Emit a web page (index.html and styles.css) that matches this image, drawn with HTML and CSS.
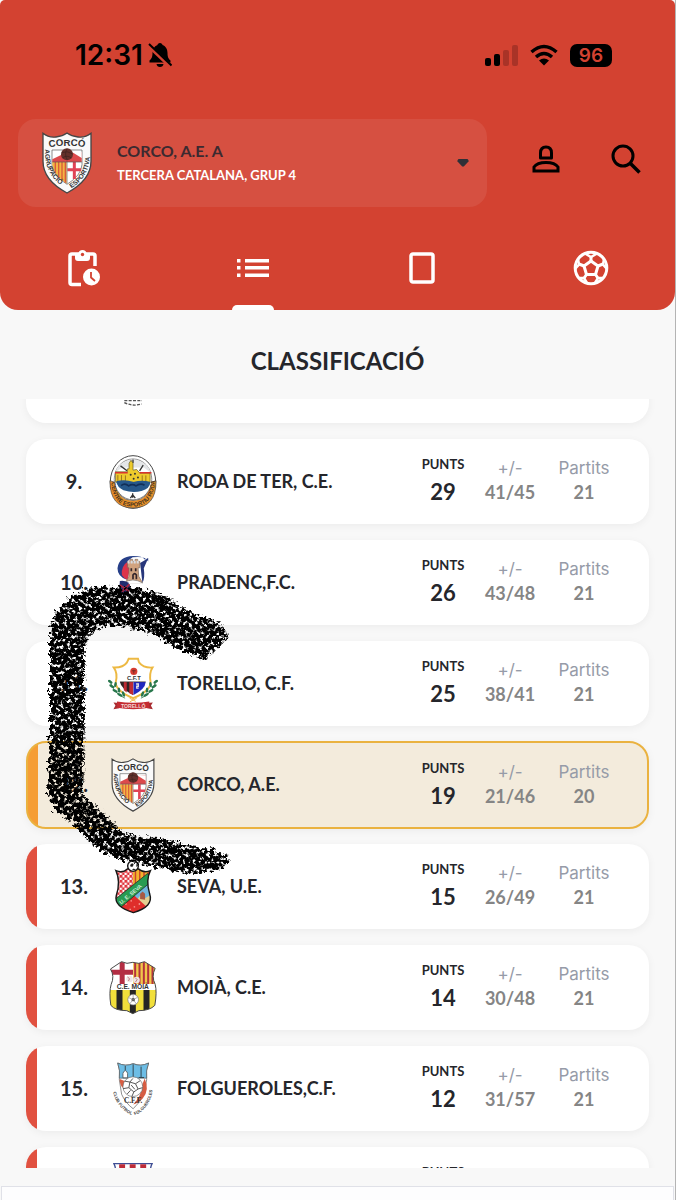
FILE: index.html
```html
<!DOCTYPE html>
<html lang="ca">
<head>
    <meta charset="UTF-8">
    <meta name="viewport" content="width=device-width, initial-scale=1.0">
    <title>Classificació</title>
    <link rel="stylesheet" href="styles.css">
</head>
<body>

    <!-- Escut compartit per la capçalera i la fila de l'equip -->
    <svg class="defs" aria-hidden="true">
        <symbol id="escut-corco" viewBox="0 0 150 186">
            <path d="M3 4Q20 18 42 15Q62 13 75 3Q88 13 108 15Q130 18 147 4V88C147 130 118 160 75 183C32 160 3 130 3 88Z" fill="#fafafa" stroke="#454545" stroke-width="4"/>
            <path d="M30 54H120V98Q118 130 75 157Q32 130 30 98Z" fill="#fff" stroke="#555" stroke-width="2"/>
            <path d="M31 82L68 64L119 60V90H31Z" fill="#dc4a4c"/>
            <path d="M90 60H119V78Z" fill="#fff"/>
            <path d="M31 90H74V155Q34 128 31 98Z" fill="#f4b443"/>
            <path d="M40 90V124M50 90V138M60 90V146M70 90V152" stroke="#d95b3a" stroke-width="4"/>
            <path d="M97 90V141M76 113H117" stroke="#e04355" stroke-width="9"/>
            <path d="M31 90H119M75 88V155" stroke="#555" stroke-width="2"/>
            <circle cx="75" cy="67" r="18" fill="#63302a"/>
            <path d="M59 62Q75 55 91 65M62 77Q75 68 88 78M75 50Q66 67 76 84" fill="none" stroke="#3d211e" stroke-width="2"/>
            <path id="corco-dalt" d="M14 47Q75 36 136 47" fill="none"/>
            <path id="corco-esquerra" d="M9 52C7 103 26 140 64 164" fill="none"/>
            <path id="corco-dreta" d="M88 169C125 147 146 110 145 54" fill="none"/>
            <g font-family="Liberation Sans, sans-serif" font-weight="bold" fill="#333">
                <text font-size="29"><textPath href="#corco-dalt" startOffset="50%" text-anchor="middle">CORCÓ</textPath></text>
                <text font-size="20"><textPath href="#corco-esquerra">AGRUPACIÓ</textPath></text>
                <text font-size="20"><textPath href="#corco-dreta">ESPORTIVA</textPath></text>
            </g>
        </symbol>
    </svg>

    <header class="app-header">
        <div class="status-bar">
            <div class="status-time">
                <span>12:31</span>
                <svg width="24" height="26" viewBox="0 0 24 26" aria-label="Silenci">
                    <path d="M12 1C13.5 1 14.4 2 14.5 3C18 4.300 19.500 7.500 19.500 11C19.500 16 21 17 22.500 18.500V20.500H1.500V18.500C3 17 4.500 16 4.500 11C4.500 7.500 6 4.300 9.500 3C9.600 2 10.500 1 12 1ZM8.500 22H15.500Q15 25 12 25Q9 25 8.500 22Z"/>
                    <path d="M0 3L23 25" stroke="#d34231" stroke-width="4"/>
                    <path d="M1 2L23.500 23.500" stroke="#000" stroke-width="2"/>
                </svg>
            </div>
            <div class="status-icons">
                <svg width="34" height="22" viewBox="0 0 34 22" aria-label="Cobertura">
                    <rect x="1" y="14" width="6" height="8" rx="2"/>
                    <rect x="10" y="10" width="6" height="12" rx="2"/>
                    <rect x="19" y="6" width="6" height="16" rx="2" fill="#a93327"/>
                    <rect x="28" y="1" width="6" height="21" rx="2" fill="#a93327"/>
                </svg>
                <svg width="28" height="22" viewBox="0 0 28 22" aria-label="Wifi">
                    <path d="M1.500 8Q14-3 26.500 8M6 13Q14 6 22 13" fill="none" stroke="#000" stroke-width="3.500"/>
                    <path d="M9 16.500Q14 12.500 19 16.500L14 21.500Z"/>
                </svg>
                <span class="battery">96</span>
            </div>
        </div>

        <div class="team-bar">
            <button class="team-select" type="button" aria-haspopup="listbox">
                <svg class="team-crest" aria-hidden="true"><use href="#escut-corco"/></svg>
                <span class="team-text">
                    <span class="team-name">CORCO, A.E. A</span>
                    <span class="team-group">TERCERA CATALANA, GRUP 4</span>
                </span>
                <svg class="arrow" width="12" height="8" viewBox="0 0 12 8" aria-hidden="true">
                    <path d="M1.500 0H10.500Q12 1 11.500 2.500L7 7.300Q6 8 5 7.300L.5 2.500Q0 1 1.500 0Z" fill="#2f3037"/>
                </svg>
            </button>
            <div class="actions">
                <button class="icon-button" type="button" aria-label="Perfil">
                    <svg width="28" height="28" viewBox="0 0 28 28" fill="none" stroke="#000" stroke-width="3">
                        <path d="M8.500 13V8Q8.500 2 14 2Q19.500 2 19.500 8V13Z" stroke-linejoin="round"/>
                        <path d="M2 26V22Q5 17.500 14 17.500Q23 17.500 26 22V26Z"/>
                    </svg>
                </button>
                <button class="icon-button" type="button" aria-label="Cercar">
                    <svg width="30" height="30" viewBox="0 0 30 30" fill="none" stroke="#000" stroke-width="3">
                        <circle cx="12" cy="12" r="10"/>
                        <path d="M19.500 19.500L28.500 28.500" stroke-width="3.500"/>
                    </svg>
                </button>
            </div>
        </div>

        <nav class="tabs">
            <a class="tab" href="#jornada" aria-label="Jornada">
                <svg width="32" height="38" viewBox="0 0 32 38">
                    <path d="M13 35.500H4Q2 35.500 2 33.500V7Q2 5 4 5H25Q27 5 27 7V17" fill="none" stroke="#fff" stroke-width="3.500"/>
                    <path d="M7 5H10Q11 1 14.500 1Q18 1 19 5H22V9Q22 12 19 12H10Q7 12 7 9Z" fill="#fff"/>
                    <circle cx="14.500" cy="5.500" r="1.700" fill="#d34231"/>
                    <circle cx="23.500" cy="28" r="8.500" fill="#fff"/>
                    <path d="M23 23V28.500L27 32" fill="none" stroke="#d34231" stroke-width="1.800"/>
                </svg>
            </a>
            <a class="tab active" href="#classificacio" aria-label="Classificació">
                <svg width="32" height="20" viewBox="0 0 32 20" fill="#fff">
                    <path d="M0 1H3.500V4.500H0ZM8 1H32V4.500H8ZM0 8H3.500V11.500H0ZM8 8H32V11.500H8ZM0 15.500H3.500V19H0ZM8 15.500H32V19H8Z"/>
                </svg>
            </a>
            <a class="tab" href="#targetes" aria-label="Targetes">
                <svg width="26" height="32" viewBox="0 0 26 32" fill="none" stroke="#fff" stroke-width="3.500">
                    <rect x="2" y="2" width="22" height="28" rx="2"/>
                </svg>
            </a>
            <a class="tab" href="#golejadors" aria-label="Golejadors">
                <svg width="36" height="36" viewBox="0 0 36 36" fill="none" stroke="#fff" stroke-width="3">
                    <circle cx="18" cy="18" r="15.800"/>
                    <path d="M18 11L25 16L22.500 24.500H13.500L11 16Z" stroke-linejoin="round"/>
                    <path d="M18 11V6M25 16L30 14M22.500 24.500L25.500 29M13.500 24.500L10.500 29M11 16L6 14"/>
                    <path d="M12 3.500L18 7L24 3.500M31 9L30 14.500L34 19M29.500 28L25 28L22 33M14 33L11 28H6.500M2 19L6 14.500L5 9" stroke-width="2.500"/>
                </svg>
            </a>
        </nav>
    </header>

    <h1>CLASSIFICACIÓ</h1>

    <main class="list-window">
        <ol class="standings">
            <li class="row">
                <span class="position"></span>
                <svg class="crest" viewBox="0 0 150 162" aria-hidden="true">
                    <path d="M49 140H102M49 146Q75 158 101 150" fill="none" stroke="#555" stroke-width="4" stroke-dasharray="9 4"/>
                </svg>
                <span class="name"></span>
                <span class="points"><span>PUNTS</span><b>34</b></span>
                <span class="stat"></span>
                <span class="stat"></span>
            </li>
            <li class="row">
                <span class="position">9.</span>
                <svg class="crest" viewBox="0 0 146 164" aria-hidden="true">
                    <ellipse cx="73" cy="82" rx="69" ry="80" fill="#fff" stroke="#444" stroke-width="3"/>
                    <path d="M3 78Q2 160 73 161Q144 160 143 78L124 84Q121 138 73 138Q25 138 22 84Z" fill="#e7902b" stroke="#444" stroke-width="2"/>
                    <ellipse cx="73" cy="74" rx="57" ry="62" fill="#fff" stroke="#555" stroke-width="2"/>
                    <path d="M20 53Q27 20 73 13Q119 20 126 53L106 38H40Z" fill="#e4e6e8"/>
                    <path d="M35 33L55 48M104 31L93 48M73 14V24" stroke="#333" stroke-width="4"/>
                    <path d="M20 51H56V42H61V25L67 16L73 25V46L84 44L94 55H125V83H20Z" fill="#edcb2c" stroke="#5e5522" stroke-width="2"/>
                    <path d="M18 54H57M93 54H129" stroke="#d9342f" stroke-width="5"/>
                    <path d="M27 61V80M38 61V79M50 62V79M101 62V80M112 62V80" stroke="#9d751e" stroke-width="3"/>
                    <g fill="#333"><circle cx="66" cy="60" r="3"/><circle cx="79" cy="57" r="3"/><circle cx="75" cy="72" r="3"/><circle cx="88" cy="68" r="3"/></g>
                    <path d="M22 80Q48 72 75 82Q100 74 126 82Q124 103 99 109Q73 116 44 107Q25 99 22 80Z" fill="#27588a"/>
                    <path d="M37 93Q48 84 60 94Q71 86 82 94Q96 84 108 92" fill="none" stroke="#122f58" stroke-width="5"/>
                    <path d="M35 108Q72 120 112 108Q93 133 73 134Q50 132 35 108Z" fill="#fff"/>
                    <path d="M72 116V130M65 131L72 121L80 131" fill="none" stroke="#333" stroke-width="4"/>
                    <path id="roda-text" d="M7 84Q12 156 73 157Q134 156 140 78" fill="none"/>
                    <text font-family="Liberation Sans, sans-serif" font-weight="bold" font-size="18" fill="#49341e"><textPath href="#roda-text" startOffset="50%" text-anchor="middle">CENTRE ESPORTIU RODA</textPath></text>
                </svg>
                <span class="name">RODA DE TER, C.E.</span>
                <span class="points"><span>PUNTS</span><b>29</b></span>
                <span class="stat"><span>+/-</span><b>41/45</b></span>
                <span class="stat"><span>Partits</span><b>21</b></span>
            </li>
            <li class="row">
                <span class="position">10.</span>
                <svg class="crest" viewBox="0 14 94 160" aria-hidden="true">
                    <path d="M92 30Q83 13 46 18Q14 35 29 84Q1 75 1 50Q5 16 47 14Q75 14 82 24L92 21Z" fill="#263f88"/>
                    <path d="M35 28Q11 43 14 70Q21 82 31 85L42 31Z" fill="#dc344b"/>
                    <path d="M92 21L79 50Q83 79 75 94L68 35Z" fill="#28377b"/>
                    <path d="M31 30H38V24H46V30H53V24H61V30H67V49H62L64 74L75 93H25L35 74V49H31Z" fill="#d1a37f" stroke="#7b6557" stroke-width="2"/>
                    <path d="M31 32H67" stroke="#d8dde3" stroke-width="8" stroke-dasharray="6 3"/>
                    <path d="M42 50V59M55 50V59M47 83V70Q52 62 57 70V83" stroke="#34262a" stroke-width="5" fill="none"/>
                    <path d="M20 94Q45 76 76 94" fill="#fff" stroke="#777" stroke-width="2"/>
                    <path d="M8 88Q33 84 40 106Q34 131 20 132Q4 122 8 88Z" fill="#222d70"/>
                    <path d="M8 100L35 119M14 120L36 98" stroke="#a52642" stroke-width="6"/>
                </svg>
                <span class="name">PRADENC,F.C.</span>
                <span class="points"><span>PUNTS</span><b>26</b></span>
                <span class="stat"><span>+/-</span><b>43/48</b></span>
                <span class="stat"><span>Partits</span><b>21</b></span>
            </li>
            <li class="row">
                <span class="position">11.</span>
                <svg class="crest" viewBox="0 0 155 164" aria-hidden="true">
                    <path d="M64 4H93L96 15Q110 33 138 31Q127 48 132 77Q132 103 78 126Q24 103 24 77Q31 48 18 31Q47 32 59 15Z" fill="#fff" stroke="#edb943" stroke-width="6"/>
                    <path d="M37 76H78V116Q41 98 37 76Z" fill="#302024"/>
                    <path d="M49 76H58V108L49 101ZM66 76H78V116L66 111Z" fill="#bf2933"/>
                    <path d="M79 76H117Q115 99 79 116Z" fill="#2028bf"/>
                    <path d="M37 75H117" stroke="#443332" stroke-width="2"/>
                    <path d="M87 82H94V89H89V95H95" fill="none" stroke="#e4dfdf" stroke-width="4"/>
                    <circle cx="80" cy="43" r="11" fill="#d63c32"/><path d="M74 41H86M80 38V50" stroke="#732b24" stroke-width="3"/>
                    <text x="80" y="69" text-anchor="middle" font-family="Liberation Sans, sans-serif" font-weight="bold" font-size="18" fill="#333">C.F.T</text>
                    <path d="M6 71Q16 112 53 126M149 71Q139 112 102 126" fill="none" stroke="#4c8c61" stroke-width="3"/>
                    <g fill="#28774c">
                        <ellipse cx="7" cy="75" rx="8" ry="4" transform="rotate(35 7 75)"/><ellipse cx="12" cy="89" rx="9" ry="4" transform="rotate(30 12 89)"/><ellipse cx="23" cy="84" rx="8" ry="4" transform="rotate(100 23 84)"/><ellipse cx="22" cy="103" rx="9" ry="4" transform="rotate(28 22 103)"/><ellipse cx="34" cy="101" rx="8" ry="4" transform="rotate(85 34 101)"/><ellipse cx="37" cy="116" rx="9" ry="4" transform="rotate(28 37 116)"/><ellipse cx="48" cy="113" rx="9" ry="4" transform="rotate(70 48 113)"/>
                        <ellipse cx="148" cy="75" rx="8" ry="4" transform="rotate(-35 148 75)"/><ellipse cx="143" cy="89" rx="9" ry="4" transform="rotate(-30 143 89)"/><ellipse cx="132" cy="84" rx="8" ry="4" transform="rotate(80 132 84)"/><ellipse cx="133" cy="103" rx="9" ry="4" transform="rotate(-28 133 103)"/><ellipse cx="121" cy="101" rx="8" ry="4" transform="rotate(95 121 101)"/><ellipse cx="118" cy="116" rx="9" ry="4" transform="rotate(-28 118 116)"/><ellipse cx="107" cy="113" rx="9" ry="4" transform="rotate(110 107 113)"/>
                    </g>
                    <path d="M67 126L86 136M89 126L68 137" stroke="#edb943" stroke-width="3"/>
                    <path d="M17 139L35 141V157L17 160L23 149ZM139 139L121 141V157L139 160L133 149Z" fill="#a92d31"/>
                    <path d="M28 136Q78 145 128 136V156Q78 164 28 156Z" fill="#c42c32"/>
                    <text x="78" y="156" text-anchor="middle" font-family="Liberation Sans, sans-serif" font-weight="bold" font-size="16" fill="#f2d9d5">TORELLÓ</text>
                </svg>
                <span class="name">TORELLO, C.F.</span>
                <span class="points"><span>PUNTS</span><b>25</b></span>
                <span class="stat"><span>+/-</span><b>38/41</b></span>
                <span class="stat"><span>Partits</span><b>21</b></span>
            </li>
            <li class="row own-team">
                <span class="position">12.</span>
                <svg class="crest" aria-hidden="true"><use href="#escut-corco"/></svg>
                <span class="name">CORCO, A.E.</span>
                <span class="points"><span>PUNTS</span><b>19</b></span>
                <span class="stat"><span>+/-</span><b>21/46</b></span>
                <span class="stat"><span>Partits</span><b>20</b></span>
            </li>
            <li class="row relegation">
                <span class="position">13.</span>
                <svg class="crest" viewBox="0 0 104 152" aria-hidden="true">
                    <defs>
                        <clipPath id="seva-clip"><path d="M4 30Q23 38 36 25Q52 20 67 25Q83 38 101 30Q87 57 99 96Q111 131 53 148Q-3 131 5 100Q18 60 4 30Z"/></clipPath>
                        <pattern id="seva-quadres" width="14" height="14" patternUnits="userSpaceOnUse"><path d="M0 0H14V14H0Z" fill="#fff"/><path d="M0 0H8V8H0ZM7 7H15V15H7Z" fill="#df3038"/></pattern>
                    </defs>
                    <g clip-path="url(#seva-clip)">
                        <path d="M0 20H52V115H0Z" fill="url(#seva-quadres)"/>
                        <path d="M52 20H104V80H52Z" fill="#f2b32e"/>
                        <path d="M59 20V80M71 20V70M83 20V60M95 20V50" stroke="#cc432b" stroke-width="4"/>
                        <path d="M50 102L104 47V120H50Z" fill="#70b6de"/>
                        <path d="M62 113L73 99L87 107L104 97V142H75Z" fill="#e4cf91"/>
                        <path d="M72 110V95L79 89L86 95V112Z" fill="#a75a45"/>
                        <path d="M0 146L50 95L92 133L78 155H0Z" fill="#df2e2b"/>
                        <path d="M30 124H34M45 115H49M54 132H58M68 124H72M42 139H46" stroke="#f8a59d" stroke-width="4"/>
                        <path d="M0 112L93 38L104 60L13 137Z" fill="#299b52" stroke="#222" stroke-width="2"/>
                        <path id="seva-text" d="M19 125L101 56" fill="none"/>
                        <text font-family="Liberation Sans, sans-serif" font-weight="bold" font-size="15" fill="#d7efdc"><textPath href="#seva-text">U. E. SEVA</textPath></text>
                    </g>
                    <path d="M4 30Q23 38 36 25Q52 20 67 25Q83 38 101 30Q87 57 99 96Q111 131 53 148Q-3 131 5 100Q18 60 4 30Z" fill="none" stroke="#181818" stroke-width="4"/>
                    <circle cx="52" cy="17" r="15" fill="#fff" stroke="#171717" stroke-width="4"/>
                    <path d="M45 12L50 9L54 13L51 19H45ZM62 9L67 15L61 20M48 29L54 24L61 28" fill="#222"/>
                </svg>
                <span class="name">SEVA, U.E.</span>
                <span class="points"><span>PUNTS</span><b>15</b></span>
                <span class="stat"><span>+/-</span><b>26/49</b></span>
                <span class="stat"><span>Partits</span><b>21</b></span>
            </li>
            <li class="row relegation">
                <span class="position">14.</span>
                <svg class="crest" viewBox="0 0 143 162" aria-hidden="true">
                    <defs><clipPath id="moia-clip"><path d="M37 2Q53 11 71 4Q89 11 106 2L138 22Q126 46 138 70Q144 93 137 133Q122 149 89 149L71 158L53 149Q18 149 5 133Q-1 93 6 70Q17 46 4 24Z"/></clipPath></defs>
                    <g clip-path="url(#moia-clip)">
                        <path d="M0 0H72V72H0Z" fill="#fff"/>
                        <path d="M39 0V72M0 34H72" stroke="#b32d43" stroke-width="15"/>
                        <path d="M72 0H143V72H72Z" fill="#f0c84a"/>
                        <path d="M78 0V72M91 0V72M104 0V72M117 0V72M130 0V72" stroke="#b5323d" stroke-width="6"/>
                        <path d="M0 69H143V88H0Z" fill="#fff"/>
                        <path d="M0 87H143V162H0Z" fill="#f1df3b"/>
                        <path d="M31 87V162M71 87V162M112 87V162" stroke="#252525" stroke-width="18"/>
                    </g>
                    <path d="M37 2Q53 11 71 4Q89 11 106 2L138 22Q126 46 138 70Q144 93 137 133Q122 149 89 149L71 158L53 149Q18 149 5 133Q-1 93 6 70Q17 46 4 24Z" fill="none" stroke="#4a4a4a" stroke-width="3"/>
                    <circle cx="61" cy="54" r="10" fill="#f0e6e6"/><circle cx="82" cy="57" r="10" fill="#f0e6e6"/>
                    <path d="M55 48L61 53L58 60M78 50L84 56L79 63" fill="none" stroke="#a9474c" stroke-width="2"/>
                    <text x="71" y="85" text-anchor="middle" font-family="Liberation Sans, sans-serif" font-weight="bold" font-size="20" fill="#333">C.E. MOIÀ</text>
                    <circle cx="72" cy="116" r="16" fill="#fff" stroke="#777" stroke-width="2"/>
                    <circle cx="72" cy="116" r="5" fill="#333"/>
                    <path d="M72 116V101M72 116L59 110M72 116L85 109M72 116L62 128M72 116L82 129" stroke="#888" stroke-width="2"/>
                </svg>
                <span class="name">MOIÀ, C.E.</span>
                <span class="points"><span>PUNTS</span><b>14</b></span>
                <span class="stat"><span>+/-</span><b>30/48</b></span>
                <span class="stat"><span>Partits</span><b>21</b></span>
            </li>
            <li class="row relegation">
                <span class="position">15.</span>
                <svg class="crest" viewBox="0 0 125 164" aria-hidden="true">
                    <path d="M16 3Q39 15 63 5Q86 15 110 3Q100 26 104 54L96 96Q86 122 63 142Q39 124 28 98L21 54Q25 26 16 3Z" fill="#fff" stroke="#555" stroke-width="2"/>
                    <path d="M16 3Q39 15 63 5Q86 15 110 3Q101 23 104 49H21Q24 24 16 3Z" fill="#6dbde5" stroke="#555" stroke-width="2"/>
                    <path d="M32 48V34Q39 18 46 34V48Z" fill="#fff" stroke="#333" stroke-width="2"/>
                    <path d="M39 12V25M63 7V48M87 14V47M80 47H96" stroke="#34454f" stroke-width="3"/>
                    <path d="M98 50Q114 85 92 111Q77 126 63 129Q89 102 88 75Z" fill="#d65d42"/>
                    <path d="M22 52Q22 69 31 79L37 58Z" fill="#d65d42"/>
                    <circle cx="62" cy="75" r="30" fill="#fff" stroke="#666" stroke-width="2"/>
                    <path d="M37 58L53 61L62 50M53 61L50 78L32 81M50 78L65 91L59 105M53 61L70 66L84 57M70 66L78 82L91 78M78 82L65 91M45 97L55 86M57 70L68 83" fill="none" stroke="#555" stroke-width="3"/>
                    <text x="63" y="126" text-anchor="middle" font-family="Liberation Serif, serif" font-weight="bold" font-size="22" fill="#333">C.F.F.</text>
                    <path id="folg-esquerra" d="M3 91Q10 137 60 162" fill="none"/>
                    <path id="folg-dreta" d="M68 162Q115 140 122 83" fill="none"/>
                    <g font-family="Liberation Sans, sans-serif" font-weight="bold" font-size="13" fill="#444">
                        <text><textPath href="#folg-esquerra">CLUB FUTBOL</textPath></text>
                        <text><textPath href="#folg-dreta">FOLGUEROLES</textPath></text>
                    </g>
                </svg>
                <span class="name">FOLGUEROLES,C.F.</span>
                <span class="points"><span>PUNTS</span><b>12</b></span>
                <span class="stat"><span>+/-</span><b>31/57</b></span>
                <span class="stat"><span>Partits</span><b>21</b></span>
            </li>
            <li class="row relegation">
                <span class="position"></span>
                <svg class="crest" viewBox="0 0 122 164" aria-hidden="true">
                    <path d="M3 2H119Q112 16 115 30V120L61 160L7 120V30Q10 16 3 2Z" fill="#fff" stroke="#3f4e94" stroke-width="4"/>
                    <path d="M28 4V120M60 4V145M92 4V120" stroke="#bd2d3a" stroke-width="18"/>
                </svg>
                <span class="name"></span>
                <span class="points"><span>PUNTS</span><b>&nbsp;</b></span>
                <span class="stat"></span>
                <span class="stat"></span>
            </li>
        </ol>
    </main>

    <footer class="bottom-bar"></footer>

    <!-- Marca feta a mà sobre la llista -->
    <svg class="scribble" width="196" height="300" viewBox="44 580 196 300" aria-hidden="true">
        <defs>
            <filter id="carbo" x="44" y="580" width="196" height="300" filterUnits="userSpaceOnUse" color-interpolation-filters="sRGB">
                <feTurbulence type="fractalNoise" baseFrequency="0.28" numOctaves="3" seed="7" result="gra"/>
                <feColorMatrix in="gra" type="matrix" values="0 0 0 0 0  0 0 0 0 0  0 0 0 0 0  6 0 0 0 -1.8" result="textura"/>
                <feDisplacementMap in="SourceGraphic" in2="gra" scale="12" xChannelSelector="R" yChannelSelector="G" result="vora"/>
                <feGaussianBlur in="vora" stdDeviation="0.6" result="suau"/>
                <feComposite in="suau" in2="textura" operator="in"/>
            </filter>
        </defs>
        <path filter="url(#carbo)" d="M50 640Q50 606 80 592Q92 586 120 587Q150 587 168 598Q190 614 210 619Q224 623 229 637Q218 648 205 659Q191 654 177 648L157 637Q142 627 113 625Q91 626 85 645V720L83 796Q101 809 117 827Q126 838 163 838L200 848Q220 848 231 861Q223 871 205 872Q181 875 163 868L130 862Q105 857 90 842L70 820Q52 812 48 793L50 733Z"/>
    </svg>

</body>
</html>
```
FILE: styles.css
```css
:root {
    --vermell: #d34231;
    --vermell-fila: #e15140;
    --groc: #eab240;
    --fons: #f8f8f8;
    --text: #25262b;
    --text-gris: #858585;
    --text-blau: #969ba8;
}

* {
    box-sizing: border-box;
}

body {
    position: relative;
    display: flex;
    flex-direction: column;
    height: 100vh;
    margin: 0;
    background-color: var(--fons);
    border-right: 1px solid #b4b4b4;
    color: var(--text);
    font-family: Lato, "Liberation Sans", sans-serif;
    overflow: hidden;
}

button {
    padding: 0;
    border: none;
    background: none;
    font: inherit;
    cursor: pointer;
}

.defs {
    position: absolute;
    width: 0;
    height: 0;
}

/* --- Capçalera --- */
.app-header {
    flex: none;
    padding-top: 40px;
    background-color: var(--vermell);
    border-radius: 5px 5px 18px 18px;
}

.status-bar {
    display: flex;
    justify-content: space-between;
    align-items: center;
    height: 30px;
    padding: 0 63px 0 75px;
    color: #000;
    font-family: Inter, sans-serif;
}

.status-time,
.status-icons {
    display: flex;
    align-items: center;
}

.status-time {
    gap: 5px;
    font-size: 28px;
    font-weight: 600;
}

.status-icons {
    gap: 12px;
}

.battery {
    width: 42px;
    border-radius: 7px;
    background-color: #000;
    color: var(--vermell);
    font-size: 19px;
    font-weight: 600;
    line-height: 23px;
    text-align: center;
}

.team-bar {
    display: flex;
    gap: 28px;
    padding: 49px 18px 0;
}

.team-select {
    flex: 1;
    display: flex;
    align-items: center;
    gap: 25px;
    height: 88px;
    padding: 0 18px 0 24px;
    border-radius: 18px;
    background-color: rgba(255, 255, 255, 0.08);
    text-align: left;
}

.team-crest {
    width: 50px;
    height: 62px;
}

.team-text {
    flex: 1;
    display: flex;
    flex-direction: column;
    font-weight: 700;
    line-height: 24px;
}

.team-name {
    color: #3c2a30;
    font-size: 16px;
}

.team-group {
    color: #fff;
    font-size: 13px;
}

.actions {
    display: flex;
    gap: 18px;
    height: 80px;
    align-items: center;
}

.icon-button {
    display: flex;
    justify-content: center;
    align-items: center;
    width: 62px;
    height: 62px;
}

.icon-button:first-child {
    justify-content: center;
}

.tabs {
    display: flex;
    margin-top: 18px;
}

.tab {
    flex: 1;
    display: flex;
    flex-direction: column;
    justify-content: center;
    align-items: center;
    position: relative;
    height: 85px;
}

/* Indicador de la pestanya activa */
.tab.active::after {
    content: "";
    position: absolute;
    bottom: 0;
    width: 42px;
    height: 5px;
    border-radius: 5px 5px 0 0;
    background-color: #fff;
}

h1 {
    flex: none;
    margin: 0;
    padding: 33px 0 20px;
    font-size: 24px;
    font-weight: 700;
    line-height: 36px;
    text-align: center;
}

/* --- Llista --- */
.list-window {
    flex: 1;
    min-height: 0;
    padding: 0 26px;
    overflow: hidden;
}

/* La llista es mostra desplaçada fins a la fila 8 */
.standings {
    display: flex;
    flex-direction: column;
    gap: 16px;
    margin: -61px 0 0;
    padding: 0;
    list-style: none;
}

.row {
    flex: none;
    display: grid;
    grid-template-columns: 68px 50px 1fr 56px 78px 70px;
    align-items: center;
    height: 85px;
    padding: 0 30px 0 14px;
    border-radius: 20px;
    background-color: #fff;
    box-shadow: 0 2px 8px rgba(0, 0, 0, 0.05);
}

.relegation {
    background-image: linear-gradient(90deg, var(--vermell-fila) 11px, transparent 11px);
}

.own-team {
    height: 88px;
    margin: -1px 0;
    padding: 0 28px 0 12px;
    border: 2px solid var(--groc);
    background: linear-gradient(90deg, #f59d35 10px, #f3ebdc 10px);
}

.position {
    padding-bottom: 2px;
    font-size: 20px;
    font-weight: 700;
    text-align: center;
}

.crest {
    width: 50px;
    height: 54px;
}

.name {
    padding: 0 0 2px 19px;
    font-size: 18px;
    font-weight: 700;
    white-space: nowrap;
}

.points,
.stat {
    display: flex;
    flex-direction: column;
    align-items: center;
    padding-bottom: 3px;
}

.points span {
    font-size: 13px;
    font-weight: 700;
    line-height: 24px;
}

.points b {
    font-size: 22px;
    line-height: 32px;
}

.stat span {
    color: var(--text-blau);
    font-family: Inter, sans-serif;
    font-size: 17px;
    line-height: 24px;
}

.stat b {
    color: var(--text-gris);
    font-size: 18px;
    line-height: 24px;
}

/* --- Barra inferior --- */
.bottom-bar {
    flex: none;
    height: 14px;
    margin: 18px 1px 0;
    border: 1px solid #e0e1e8;
    border-bottom: none;
    background-color: #fdfdfe;
}

.scribble {
    position: absolute;
    top: 580px;
    left: 44px;
    pointer-events: none;
}
```
